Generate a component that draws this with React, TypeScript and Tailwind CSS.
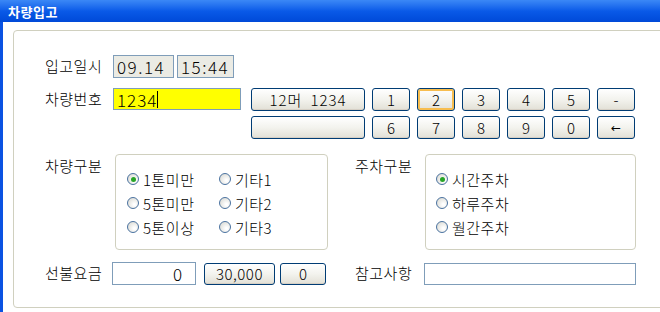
import React from "react";

const KO = "font-['Noto_Sans_CJK_KR',sans-serif] font-light";
const NUM = "font-['Noto_Sans_CJK_KR',sans-serif] font-light";

function Btn({
  children,
  className = "",
  focus = false,
}: {
  children?: React.ReactNode;
  className?: string;
  focus?: boolean;
}) {
  return (
    <div
      className={
        "flex items-center justify-center rounded-[3px] border border-[#003c74] bg-gradient-to-b from-[#ffffff] via-[#f3f3ee] to-[#e2e0d6] text-[15px] leading-none text-black " +
        NUM +
        " " +
        (focus ? "shadow-[inset_0_0_0_2px_#f7bd4f] " : "shadow-[inset_0_-1px_0_#d6d0c5] ") +
        className
      }
    >
      {children}
    </div>
  );
}

function Radio({ checked = false, label }: { checked?: boolean; label: string }) {
  return (
    <div className="flex h-[24px] items-center">
      <span className="flex h-[12px] w-[12px] shrink-0 items-center justify-center rounded-full border border-[#4a72a0] bg-[radial-gradient(circle_at_65%_65%,#ffffff_10%,#d9d9d2_90%)]">
        {checked && <span className="h-[5px] w-[5px] rounded-full bg-[#27a527]" />}
      </span>
      <span className={"ml-[4px] whitespace-nowrap text-[15px] leading-none tracking-[0.5px] " + KO}>
        {label}
      </span>
    </div>
  );
}

function Label({ children, className = "" }: { children: React.ReactNode; className?: string }) {
  return (
    <div className={"shrink-0 whitespace-nowrap text-[15px] tracking-[0.5px] " + KO + " " + className}>
      {children}
    </div>
  );
}

export default function App() {
  return (
    <div className="flex h-[312px] w-[660px] flex-col overflow-hidden bg-white font-['Noto_Sans_CJK_KR',sans-serif] text-black">
      <div className="flex h-[22px] shrink-0 items-center bg-gradient-to-b from-[#3b88f6] via-[#0a5ae8] to-[#0049d8] pl-[8px]">
        <span className="text-[13px] font-bold leading-none tracking-[0.5px] text-white">차량입고</span>
      </div>
      <div className="flex min-h-0 flex-1 border-l-[3px] border-[#0a52e2] pb-[4px] pl-[10px] pt-[8px]">
        <div className="-mr-[20px] flex flex-1 flex-col rounded-[4px] border border-[#d0d0bf] pl-[31px] pt-[24px]">
          {/* Row A */}
          <div className="flex h-[23px] items-center">
            <Label className="w-[68px]">입고일시</Label>
            <div
              className={
                "flex h-[23px] w-[61px] items-center border border-[#7f9db9] bg-[#ebebe4] pl-[3px] text-[17px] leading-none tracking-[1.5px] " +
                NUM
              }
            >
              09.14
            </div>
            <div
              className={
                "ml-[3px] flex h-[23px] w-[57px] items-center border border-[#7f9db9] bg-[#ebebe4] pl-[3px] text-[17px] leading-none tracking-[1.5px] " +
                NUM
              }
            >
              15:44
            </div>
          </div>

          {/* Row B */}
          <div className="mt-[10px] flex items-start">
            <Label className="flex h-[23px] w-[68px] items-center">차량번호</Label>
            <div
              className={
                "flex h-[22px] w-[128px] items-center border border-[#7f9db9] bg-[#ffff00] pl-[3px] text-[17px] leading-none tracking-[1px] " +
                NUM
              }
            >
              1234
              <span className="h-[17px] w-px bg-black" />
            </div>
            <div className="ml-[10px] grid grid-cols-[114px_repeat(6,38px)] auto-rows-[23px] gap-x-[7px] gap-y-[5px]">
              <Btn>
                <span className="tracking-[1px]">12머</span>
                <span className="ml-[8px] tracking-[1px]">1234</span>
              </Btn>
              <Btn>1</Btn>
              <Btn focus>2</Btn>
              <Btn>3</Btn>
              <Btn>4</Btn>
              <Btn>5</Btn>
              <Btn>-</Btn>
              <Btn />
              <Btn>6</Btn>
              <Btn>7</Btn>
              <Btn>8</Btn>
              <Btn>9</Btn>
              <Btn>0</Btn>
              <Btn>
                <span className="font-['DejaVu_Sans',sans-serif] text-[12px] font-normal">←</span>
              </Btn>
            </div>
          </div>

          {/* Row C */}
          <div className="mt-[15px] flex">
            <div className="flex w-[310px]">
              <Label className="w-[70px] leading-[24px]">차량구분</Label>
              <div className="grid h-[96px] w-[213px] grid-cols-[92px_1fr] content-start rounded-[4px] border border-[#d0d0bf] pl-[11px] pt-[12px]">
                <Radio checked label="1톤미만" />
                <Radio label="기타1" />
                <Radio label="5톤미만" />
                <Radio label="기타2" />
                <Radio label="5톤이상" />
                <Radio label="기타3" />
              </div>
            </div>
            <div className="flex">
              <Label className="w-[70px] leading-[24px]">주차구분</Label>
              <div className="flex h-[96px] w-[211px] flex-col rounded-[4px] border border-[#d0d0bf] pl-[10px] pt-[12px]">
                <Radio checked label="시간주차" />
                <Radio label="하루주차" />
                <Radio label="월간주차" />
              </div>
            </div>
          </div>

          {/* Row D */}
          <div className="mt-[12px] flex h-[23px] items-center">
            <div className="flex w-[310px] items-center">
              <Label className="w-[67px]">선불요금</Label>
              <div
                className={
                  "flex h-[23px] w-[84px] items-center justify-end border border-[#7f9db9] bg-white pr-[13px] text-[17px] leading-none " +
                  NUM
                }
              >
                0
              </div>
              <Btn className="ml-[8px] h-[22px] w-[71px]">
                <span className="tracking-[0.5px]">30,000</span>
              </Btn>
              <Btn className="ml-[5px] h-[22px] w-[46px]">0</Btn>
            </div>
            <div className="flex items-center">
              <Label className="w-[69px]">참고사항</Label>
              <div className="h-[22px] w-[212px] border border-[#7f9db9] bg-white" />
            </div>
          </div>
        </div>
      </div>
    </div>
  );
}
